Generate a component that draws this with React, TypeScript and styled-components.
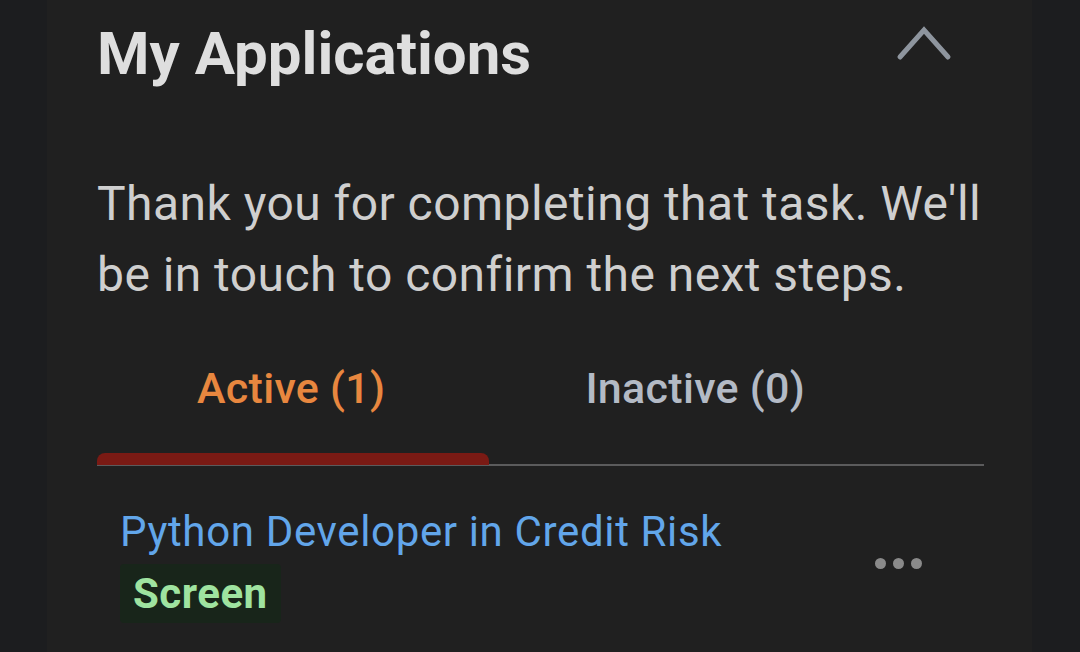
import React, {useState} from 'react';
import styled, {createGlobalStyle} from 'styled-components';

const GlobalStyle = createGlobalStyle`
  html, body {
    margin: 0;
    padding: 0;
    background: #1c1d1f;
    font-family: Roboto, "Noto Sans", sans-serif;
  }
`;

type TabKey = 'active' | 'inactive';

const App: React.FC = () => {
    const [tab, setTab] = useState<TabKey>('active');
    return (
        <>
            <GlobalStyle/>
            <StyledPage>
                <StyledCard>
                    <StyledHeader>
                        <StyledTitle>My Applications</StyledTitle>
                        <StyledCollapse aria-label="Collapse">
                            <svg width="56" height="36" viewBox="0 0 56 36">
                                <path d="M4 31 L28 4 L52 31" fill="none" stroke="#8e959e" strokeWidth="5"
                                      strokeLinecap="round" strokeLinejoin="miter"/>
                            </svg>
                        </StyledCollapse>
                    </StyledHeader>
                    <StyledMessage>
                        Thank you for completing that task. We'll be in touch to confirm the next steps.
                    </StyledMessage>
                    <StyledTabs>
                        <StyledTab $active={tab === 'active'} onClick={() => setTab('active')}>
                            Active (1)
                        </StyledTab>
                        <StyledTab $active={tab === 'inactive'} onClick={() => setTab('inactive')}>
                            Inactive (0)
                        </StyledTab>
                    </StyledTabs>
                    <StyledItem>
                        <StyledItemInfo>
                            <StyledJobLink href="#">Python Developer in Credit Risk</StyledJobLink>
                            <StyledStage>Screen</StyledStage>
                        </StyledItemInfo>
                        <StyledMore aria-label="More">
                            <span/><span/><span/>
                        </StyledMore>
                    </StyledItem>
                </StyledCard>
            </StyledPage>
        </>
    );
}

const StyledPage = styled.div`
  height: 652px;
  overflow: hidden;
  padding: 0 48px 0 47px;
`;

const StyledCard = styled.div`
  background: #202020;
  height: 100%;
  padding: 0 48px 0 50px;
`;

const StyledHeader = styled.div`
  display: flex;
  align-items: center;
  justify-content: space-between;
  height: 106px;
`;

const StyledTitle = styled.h2`
  margin: 0;
  color: #dedede;
  font-size: 60px;
  font-weight: 700;
`;

const StyledCollapse = styled.button`
  background: none;
  border: none;
  padding: 0;
  margin-right: 32px;
  margin-top: -18px;
  display: flex;
`;

const StyledMessage = styled.p`
  margin: 62px 0 0 0;
  color: #cfcfcf;
  font-size: 48px;
  letter-spacing: 0.45px;
  line-height: 71px;
`;

const StyledTabs = styled.div`
  display: flex;
  margin-top: 53px;
  border-bottom: 2px solid #5b5b5c;
`;

const StyledTab = styled.button<{$active: boolean}>`
  position: relative;
  background: none;
  border: none;
  font-family: Roboto, sans-serif;
  font-size: 43px;
  font-weight: 500;
  letter-spacing: 0.3px;
  padding: 0 100px 52px 100px;
  margin-bottom: -1px;
  color: ${p => p.$active ? '#e8873f' : '#b3bac5'};
  cursor: pointer;

  &::after {
    content: '';
    display: ${p => p.$active ? 'block' : 'none'};
    position: absolute;
    left: 0;
    right: -4px;
    bottom: 0;
    height: 12px;
    border-radius: 8px 8px 0 0;
    background: #7a1a14;
  }
`;

const StyledItem = styled.div`
  display: flex;
  align-items: center;
  justify-content: space-between;
  padding: 42px 62px 0 23px;
`;

const StyledItemInfo = styled.div`
  display: flex;
  flex-direction: column;
  align-items: flex-start;
`;

const StyledJobLink = styled.a`
  color: #62a6ea;
  font-size: 42px;
  letter-spacing: 0.65px;
  text-decoration: none;
  line-height: 48px;
`;

const StyledStage = styled.span`
  margin-top: 8px;
  background: #18251a;
  color: #9fe3a0;
  font-size: 42px;
  font-weight: 700;
  letter-spacing: 0.5px;
  line-height: 59px;
  padding: 0 13px;
  border-radius: 4px;
`;

const StyledMore = styled.button`
  background: none;
  border: none;
  padding: 0;
  margin-top: -4px;
  display: flex;
  gap: 7px;

  span {
    width: 11px;
    height: 11px;
    border-radius: 50%;
    background: #8a8a8a;
  }
`;

export default App;
